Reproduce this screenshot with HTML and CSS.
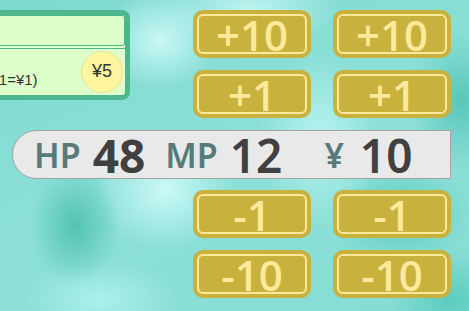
FILE: index.html
```html
<!DOCTYPE html>
<html lang="ja">
<head>
    <meta charset="UTF-8">
    <meta name="viewport" content="width=device-width, initial-scale=1.0">
    <title>ステータス</title>
    <link rel="stylesheet" href="styles.css">
</head>
<body>
    <div class="screen">
        <div class="top-row">
            <div class="shop-panel">
                <div class="shop-input"></div>
                <div class="shop-body">
                    <span class="shop-note">(HP1=¥1)</span>
                    <span class="coin">¥5</span>
                </div>
            </div>
            <div class="pad">
                <button class="step-btn"><span>+10</span></button>
                <button class="step-btn"><span>+10</span></button>
                <button class="step-btn"><span>+1</span></button>
                <button class="step-btn"><span>+1</span></button>
            </div>
        </div>

        <div class="status-bar">
            <span class="stat-label">HP</span>
            <span class="stat-value heavy">48</span>
            <span class="stat-label mp">MP</span>
            <span class="stat-value">12</span>
            <span class="stat-label yen">¥</span>
            <span class="stat-value">10</span>
        </div>

        <div class="pad bottom">
            <button class="step-btn"><span>-1</span></button>
            <button class="step-btn"><span>-1</span></button>
            <button class="step-btn"><span>-10</span></button>
            <button class="step-btn"><span>-10</span></button>
        </div>
    </div>
</body>
</html>
```

FILE: styles.css
```css
* {
    margin: 0;
    padding: 0;
    box-sizing: border-box;
}

html, body {
    height: 100%;
}

body {
    font-family: "Noto Sans", "Noto Sans CJK JP", sans-serif;
    background:
        radial-gradient(ellipse 45px 60px at 75px 225px, rgba(72, 190, 170, 0.85), rgba(72, 190, 170, 0) 100%),
        radial-gradient(ellipse 70px 60px at 165px 190px, rgba(205, 250, 250, 0.95), rgba(205, 250, 250, 0) 100%),
        radial-gradient(ellipse 60px 50px at 160px 40px, rgba(205, 250, 250, 0.95), rgba(205, 250, 250, 0) 100%),
        radial-gradient(ellipse 90px 40px at 250px 10px, rgba(205, 250, 250, 0.8), rgba(205, 250, 250, 0) 100%),
        radial-gradient(ellipse 60px 90px at 320px 140px, rgba(200, 250, 250, 0.7), rgba(200, 250, 250, 0) 100%),
        radial-gradient(ellipse 50px 70px at 460px 100px, rgba(80, 195, 180, 0.85), rgba(80, 195, 180, 0) 100%),
        radial-gradient(ellipse 70px 50px at 400px 215px, rgba(80, 200, 185, 0.8), rgba(80, 200, 185, 0) 100%),
        radial-gradient(ellipse 60px 50px at 450px 300px, rgba(80, 200, 185, 0.8), rgba(80, 200, 185, 0) 100%),
        radial-gradient(ellipse 80px 40px at 100px 300px, rgba(180, 245, 240, 0.8), rgba(180, 245, 240, 0) 100%),
        linear-gradient(160deg, #7ed9ce 0%, #8ce0d7 50%, #86dcd3 100%);
    overflow: hidden;
}

.screen {
    padding-top: 10px;
}

.top-row {
    display: flex;
    align-items: flex-start;
}

.shop-panel {
    width: 170px;
    height: 90px;
    margin-left: -40px;
    background: #ddffca;
    border: 5px solid #4eb68f;
    border-left: none;
    border-radius: 0 8px 8px 0;
    display: flex;
    flex-direction: column;
}

.shop-input {
    height: 31px;
    background: #dcffc8;
    border: 1px solid #4eb68f;
    border-left: none;
    border-radius: 0 3px 3px 0;
}

.shop-body {
    flex: 1;
    border-top: 1px solid #4eb68f;
    margin-top: 2px;
    display: flex;
    align-items: center;
    justify-content: space-between;
    padding-right: 2px;
}

.shop-note {
    font-family: "Liberation Sans", "Noto Sans CJK JP", sans-serif;
    font-size: 15px;
    color: #333;
    margin-left: 13px;
    margin-top: 14px;
}

.coin {
    width: 42px;
    height: 42px;
    border-radius: 50%;
    background: #fff7a0;
    border: 1px solid #efe088;
    display: flex;
    align-items: center;
    justify-content: center;
    font-family: "Liberation Sans", "Noto Sans CJK JP", sans-serif;
    font-size: 18px;
    color: #333;
    padding-bottom: 2px;
}

.pad {
    display: grid;
    grid-template-columns: 118px 118px;
    column-gap: 22px;
    row-gap: 12px;
    margin-left: 63px;
}

.pad.bottom {
    margin-left: 193px;
    margin-top: 11px;
}

.step-btn {
    height: 48px;
    padding: 4px;
    background: #c8b13c;
    border: none;
    border-radius: 10px;
    cursor: pointer;
}

.step-btn span {
    display: flex;
    align-items: center;
    justify-content: center;
    height: 100%;
    border: 2px solid #ffe99b;
    border-radius: 6px;
    font-family: "Open Sans", sans-serif;
    font-weight: 600;
    font-size: 42px;
    line-height: 1;
    color: #ffe99b;
    padding-top: 2px;
}

.status-bar {
    display: flex;
    align-items: center;
    width: 439px;
    height: 49px;
    margin-top: 12px;
    margin-left: 12px;
    background: #e9e9e9;
    border: 1px solid #a3a3a3;
    border-radius: 25px 0 0 25px;
    padding-left: 21px;
    line-height: 1;
}

.stat-label {
    font-size: 34px;
    font-weight: 600;
    color: #577a7a;
    margin-right: 12px;
}

.stat-label.mp {
    margin-left: 20px;
}

.stat-label.yen {
    margin-left: 42px;
    margin-right: 16px;
}

.stat-value {
    font-size: 46px;
    font-weight: 600;
    color: #404040;
}

.stat-value.heavy {
    font-weight: 700;
}
```
